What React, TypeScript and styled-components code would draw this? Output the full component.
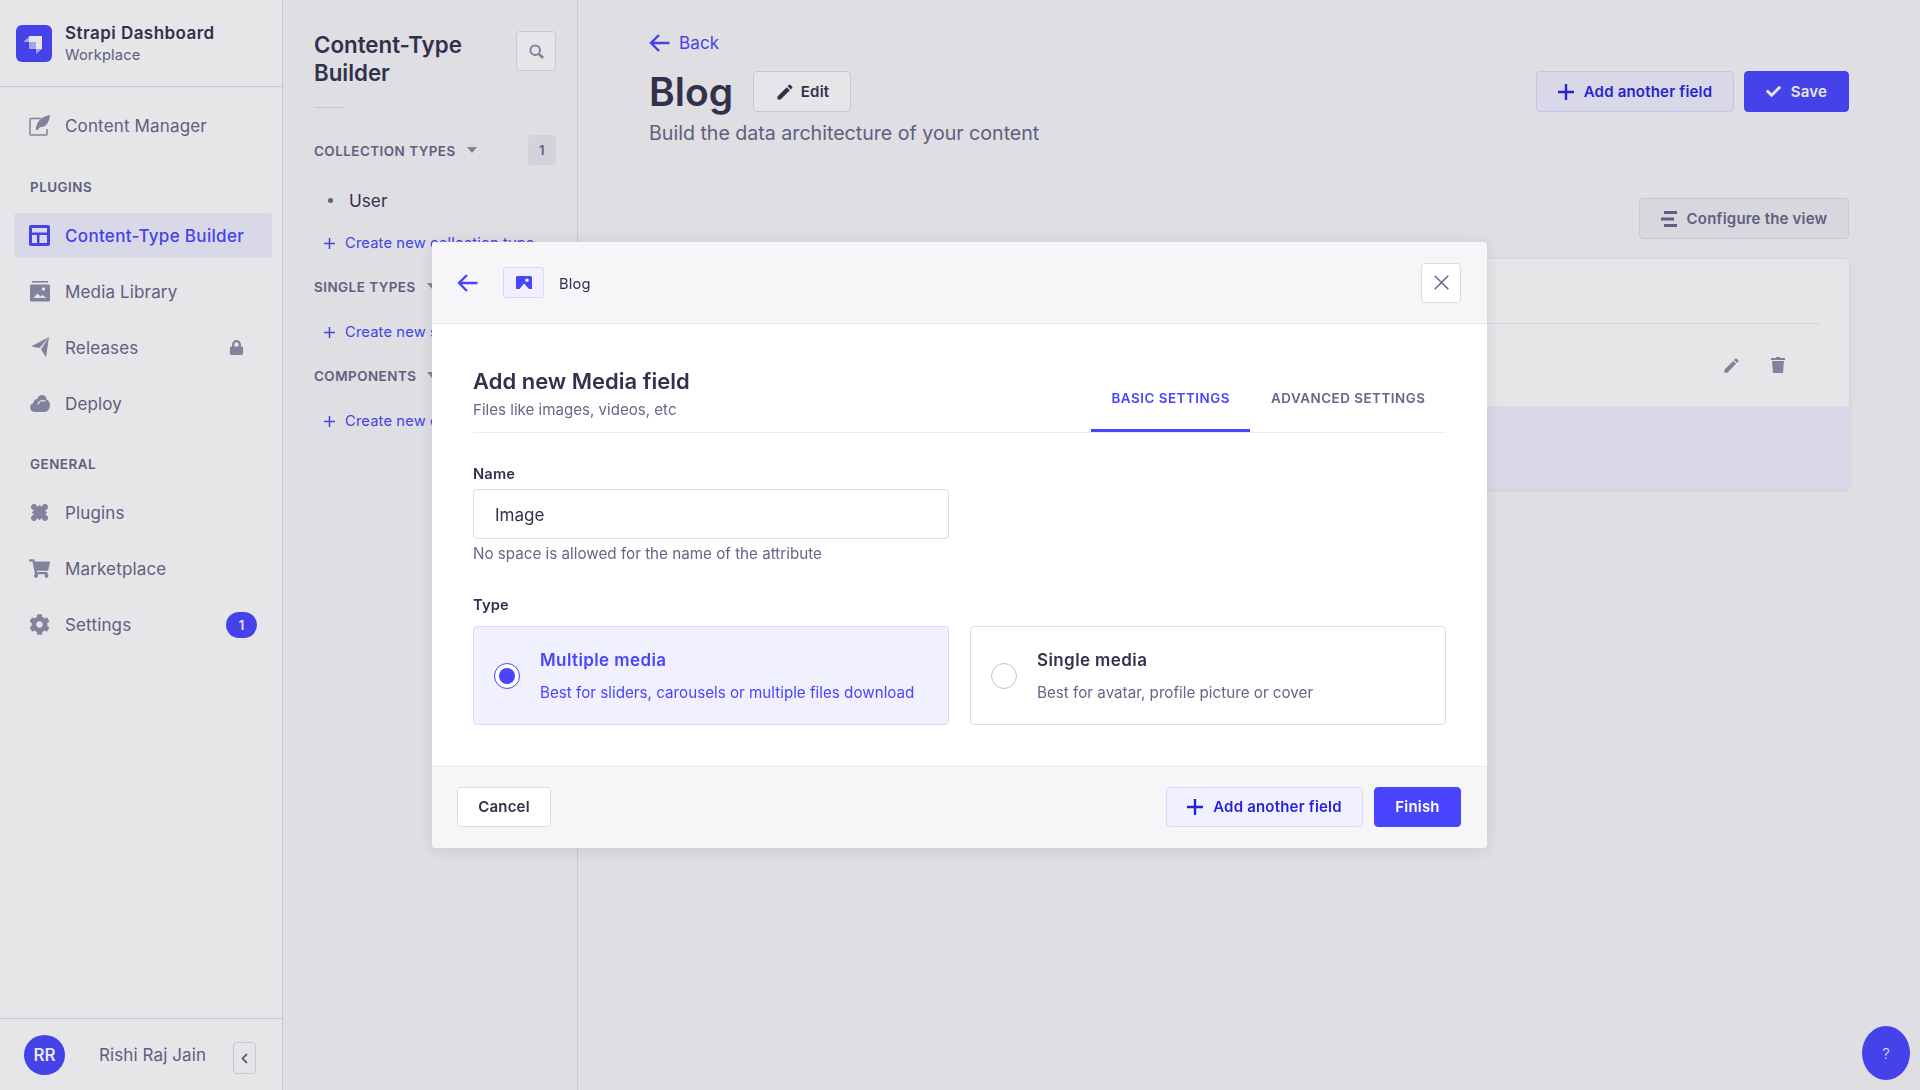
import React from "react";
import styled, { createGlobalStyle } from "styled-components";
import { FaCog, FaLock, FaShoppingCart, FaCheck } from "react-icons/fa";
import { MdEdit } from "react-icons/md";

const Global = createGlobalStyle`
  html, body { margin: 0; padding: 0; height: 100%; }
  body { background: #f6f6f9; font-family: Inter, "Noto Sans", sans-serif; color: #32324d; overflow: hidden; }
  * { box-sizing: border-box; }
`;

const Page = styled.div`display: flex; width: 1920px; height: 1090px; background: #f6f6f9;`;

/* Sidebar */
const Sidebar = styled.aside`
  width: 283px; flex: none; display: flex; flex-direction: column;
  background: #fff; border-right: 1px solid #dcdce4;
`;
const Brand = styled.div`
  height: 87px; flex: none; display: flex; align-items: center; gap: 13px; padding: 0 16px;
  border-bottom: 1px solid #dcdce4;
`;
const BrandText = styled.div`display: flex; flex-direction: column; gap: 3px; padding-top: 1px;`;
const BrandName = styled.div`font-size: 17px; line-height: 20px; font-weight: 600; letter-spacing: 0.45px; color: #32324d;`;
const BrandSub = styled.div`font-size: 14.7px; line-height: 18px; letter-spacing: 0.15px; color: #666687;`;
const Nav = styled.nav`flex: 1; display: flex; flex-direction: column; padding: 16px 10px 0 14px; gap: 11px;`;
const NavLabel = styled.div<{ $top: number }>`
  height: 16px; line-height: 16px; margin: ${p => p.$top}px 0 7px 16px; font-size: 13.4px; font-weight: 600;
  color: #666687; text-transform: uppercase; letter-spacing: 0.5px;
`;
const NavItem = styled.a<{ $active?: boolean }>`
  height: 45px; display: flex; align-items: center; gap: 15px; padding: 0 15px; border-radius: 4px;
  font-size: 17px; font-weight: ${p => (p.$active ? 500 : 400)}; letter-spacing: ${p => (p.$active ? "0.32px" : "0.15px")};
  color: ${p => (p.$active ? "#4945ff" : "#666687")};
  background: ${p => (p.$active ? "#f0f0ff" : "transparent")};
`;
const NavIcon = styled.span<{ $active?: boolean }>`
  width: 21px; height: 21px; flex: none; display: flex; align-items: center; justify-content: center;
  color: ${p => (p.$active ? "#4945ff" : "#8e8ea9")};
`;
const NavSide = styled.span`margin-left: auto; display: flex; align-items: center; color: #8e8ea9;`;
const LockWrap = styled(NavSide)`margin-right: 13px;`;
const CountPill = styled.span`
  width: 31px; height: 26px; border-radius: 13px; background: #4945ff; color: #fff;
  font-size: 13px; font-weight: 600; display: flex; align-items: center; justify-content: center;
`;
const SideFoot = styled.div`
  height: 72px; flex: none; display: flex; align-items: center; padding: 0 26px 0 24px;
  border-top: 1px solid #dcdce4;
`;
const Avatar = styled.div`
  width: 41px; height: 40px; border-radius: 50%; background: #4945ff; color: #fff; flex: none;
  font-size: 17px; font-weight: 600; display: flex; align-items: center; justify-content: center;
`;
const UserName = styled.div`margin-left: 34px; font-size: 17px; letter-spacing: 0.1px; color: #666687;`;
const Collapse = styled.button`
  margin: 7px 0 0 auto; width: 23px; height: 32px; padding: 0; border-radius: 4px;
  border: 1px solid #dcdce4; background: #fff; color: #666687; display: flex; align-items: center; justify-content: center;
`;

/* Content type panel */
const Panel = styled.section`
  width: 295px; flex: none; padding: 31px 21px 0 31px; border-right: 1px solid #dcdce4;
`;
const PanelHead = styled.div`display: flex; justify-content: space-between; align-items: flex-start;`;
const PanelTitle = styled.h2`margin: 0; width: 170px; font-size: 22.3px; line-height: 28px; font-weight: 600; color: #32324d;`;
const SearchBtn = styled.button`
  width: 40px; height: 40px; padding: 0; border: 1px solid #dcdce4; border-radius: 4px; background: #fff;
  color: #8e8ea9; display: flex; align-items: center; justify-content: center;
`;
const ShortRule = styled.div`width: 30px; height: 1px; background: #dcdce4; margin: 20px 0 27px;`;
const SectionHead = styled.div<{ $later?: boolean }>`
  display: flex; align-items: center; gap: 11px; margin-top: ${p => (p.$later ? "23px" : "0")};
  min-height: 16px; font-size: 13.4px; font-weight: 600; letter-spacing: 0.5px; text-transform: uppercase; color: #666687;
`;
const SectionText = styled.span`padding-top: 2px;`;
const CountTag = styled.span`
  margin-left: auto; width: 28px; height: 30px; border-radius: 4px; background: #eaeaef; color: #666687;
  font-size: 13px; font-weight: 600; display: flex; align-items: center; justify-content: center;
`;
const ListItem = styled.div`
  display: flex; align-items: center; height: 28px; margin: 21px 0 0 14px; gap: 16px;
  font-size: 17.2px; color: #32324d;
  &::before { content: ""; width: 5px; height: 5px; border-radius: 50%; background: #666687; }
`;
const CreateLink = styled.a<{ $tight?: boolean }>`
  display: flex; align-items: center; gap: 10px; height: 22px; margin: ${p => (p.$tight ? "18px" : "26px")} 0 0 10px;
  font-size: 14.7px; letter-spacing: 0.15px; color: #4945ff; white-space: nowrap;
`;

/* Main */
const Main = styled.main`flex: 1; min-width: 0; padding: 31px 71px 0 71px;`;
const BackLink = styled.a`display: flex; align-items: center; gap: 9px; height: 24px; font-size: 17px; letter-spacing: 0.15px; color: #4945ff;`;
const HeadRow = styled.div`display: flex; justify-content: space-between; align-items: flex-start; margin-top: 16px;`;
const TitleRow = styled.div`display: flex; align-items: center; gap: 20px; height: 41px;`;
const PageTitle = styled.h1`margin: 0; font-size: 39px; line-height: 41px; font-weight: 600; color: #32324d;`;
const Subtitle = styled.p`margin: 9px 0 0; font-size: 19.6px; line-height: 24px; color: #666687;`;
const Actions = styled.div`display: flex; gap: 10px;`;
const Btn = styled.button<{ $kind?: "light" | "primary" | "ghost" | "tint"; $w: number; $h?: number; $gap?: number }>`
  width: ${p => p.$w}px; height: ${p => p.$h ?? 41}px; padding: 0; flex: none; border-radius: 4px; border: 1px solid;
  display: inline-flex; align-items: center; justify-content: center; gap: ${p => p.$gap ?? 10}px;
  font-family: inherit; font-size: 15px; font-weight: 600; letter-spacing: 0.2px;
  ${p => p.$kind === "primary" && "background:#4945ff;border-color:#4945ff;color:#fff;"}
  ${p => p.$kind === "tint" && "background:#f0f0ff;border-color:#d9d8ff;color:#271fe0;"}
  ${p => p.$kind === "ghost" && "background:#eeeef2;border-color:#dcdce4;color:#666687;"}
  ${p => (!p.$kind || p.$kind === "light") && "background:#fff;border-color:#dcdce4;color:#32324d;"}
`;
const ConfigRow = styled.div`display: flex; justify-content: flex-end; margin-top: 53px;`;
const Card = styled.div`
  margin-top: 20px; background: #fff; border-radius: 4px; overflow: hidden; box-shadow: 0 1px 4px rgba(33,33,52,.1);
`;
const CardHead = styled.div`height: 65px; margin: 0 30px; border-bottom: 1px solid #eaeaef;`;
const CardRow = styled.div`height: 82px; display: flex; align-items: center; justify-content: flex-end; gap: 30px; padding-right: 64px; color: #8e8ea9;`;
const CardFoot = styled.div`height: 83px; background: #f0f0ff;`;
const HelpBtn = styled.button`
  position: absolute; right: 10px; bottom: 10px; width: 48px; height: 54px; padding: 0; border: 0; border-radius: 50%;
  background: #4945ff; color: #fff; font-family: inherit; font-size: 15px; font-weight: 300;
`;

/* Overlay + modal */
const Overlay = styled.div`
  position: fixed; inset: 0; z-index: 5; background: rgba(50, 50, 77, 0.12);
  display: flex; align-items: flex-start; padding: 242px 0 0 432px;
`;
const Modal = styled.div`
  width: 1055px; height: 606px; display: flex; flex-direction: column; background: #fff; border-radius: 4px; overflow: hidden;
  box-shadow: 0 2px 15px rgba(33, 33, 52, 0.1);
`;
const ModalHead = styled.header`
  height: 82px; flex: none; display: flex; align-items: center; padding: 0 26px 0 25px; background: #f6f6f9;
  border-bottom: 1px solid #eaeaef;
`;
const BackArrow = styled.span`display: flex; color: #4945ff; margin-right: 25px;`;
const TypeChip = styled.span`
  width: 41px; height: 31px; border-radius: 3px; background: #f0f0ff; border: 1px solid #d9d8ff; color: #4945ff;
  display: flex; align-items: center; justify-content: center; margin-right: 15px;
`;
const Crumb = styled.span`font-size: 14.7px; letter-spacing: 0.15px; padding-top: 2px; color: #32324d;`;
const CloseBtn = styled.button`
  margin-left: auto; width: 40px; height: 40px; padding: 0; background: #fff; border: 1px solid #dcdce4; border-radius: 4px;
  color: #666687; display: flex; align-items: center; justify-content: center;
`;
const ModalBody = styled.div`flex: 1; padding: 0 41px;`;
const TabRow = styled.div`display: flex; justify-content: space-between; align-items: flex-end; border-bottom: 1px solid #eaeaef;`;
const HeadBlock = styled.div`padding: 42px 0 12px;`;
const ModalTitle = styled.h3`margin: 0; font-size: 22px; line-height: 30px; font-weight: 600; color: #32324d;`;
const ModalSub = styled.p`margin: 4px 0 0; font-size: 15.1px; line-height: 20px; color: #666687;`;
const Tabs = styled.div`display: flex;`;
const Tab = styled.div<{ $active?: boolean }>`
  padding: 0 20.500px 23px; line-height: 16px; font-size: 13.4px; font-weight: 600; letter-spacing: 0.52px; text-transform: uppercase;
  color: ${p => (p.$active ? "#4945ff" : "#666687")};
  border-bottom: 3px solid ${p => (p.$active ? "#4945ff" : "transparent")};
`;
const FieldLabel = styled.label<{ $top: number }>`
  display: block; margin-top: ${p => p.$top}px; font-size: 14.7px; line-height: 18px; font-weight: 600; letter-spacing: 0.15px; color: #32324d;
`;
const TextInput = styled.input`
  display: block; margin-top: 6px; width: 476px; height: 50px; padding: 2px 21px 0; border: 1px solid #dcdce4; border-radius: 4px;
  font-family: inherit; font-size: 17px; color: #32324d; background: #fff; outline: none;
`;
const Hint = styled.div`margin-top: 6px; font-size: 15.2px; line-height: 18px; color: #666687;`;
const RadioGrid = styled.div`display: grid; grid-template-columns: 476px 476px; gap: 21px; margin-top: 12px;`;
const RadioCard = styled.div<{ $on?: boolean }>`
  height: 99px; display: flex; align-items: center; gap: 20px; padding-left: 20px; border-radius: 4px; border: 1px solid;
  border-color: ${p => (p.$on ? "#d9d8ff" : "#dcdce4")}; background: ${p => (p.$on ? "#f0f0ff" : "#fff")};
`;
const RadioDot = styled.span<{ $on?: boolean }>`
  width: 26px; height: 26px; flex: none; border-radius: 50%; background: #fff; display: flex; align-items: center; justify-content: center;
  border: 1px solid ${p => (p.$on ? "#4945ff" : "#c0c0cf")};
  &::after { content: ""; width: 16px; height: 16px; border-radius: 50%; background: ${p => (p.$on ? "#4945ff" : "transparent")}; }
`;
const RadioName = styled.div<{ $on?: boolean }>`font-size: 17px; line-height: 22px; font-weight: 600; letter-spacing: 0.4px; color: ${p => (p.$on ? "#4945ff" : "#32324d")};`;
const RadioDesc = styled.div<{ $on?: boolean }>`margin-top: 12px; font-size: 15.2px; line-height: 20px; color: ${p => (p.$on ? "#4945ff" : "#666687")};`;
const ModalFoot = styled.footer`
  height: 82px; flex: none; display: flex; align-items: center; justify-content: space-between; padding: 0 26px 2px 25px;
  background: #f6f6f9; border-top: 1px solid #eaeaef;
`;
const FootActions = styled.div`display: flex; gap: 11px;`;

/* Icons */
const Arrow = () => (
  <svg width="21" height="20" viewBox="0 0 21 20" fill="none" stroke="currentColor" strokeWidth="2.400">
    <path d="M20.500 10H2M10 2l-8 8 8 8" />
  </svg>
);
const Plus = ({ s = 16 }: { s?: number }) => (
  <svg width={s} height={s} viewBox="0 0 16 16" fill="none" stroke="currentColor" strokeWidth={s > 12 ? 2.4 : 2.2}>
    <path d="M8 0v16M0 8h16" />
  </svg>
);
const Caret = () => (
  <svg width="10" height="6" viewBox="0 0 10 6" fill="#8e8ea9"><path d="M0 0h10L5 6z" /></svg>
);
const Logo = () => (
  <svg width="36" height="37" viewBox="0 0 36 37">
    <rect width="36" height="37" rx="6" fill="#4945ff" />
    <path d="M13 11h13v13h-6v-7h-7z" fill="#fff" />
    <path d="M13 12v5H7zM13 17h7v7h-7zM20 24h6l-6 5z" fill="#fff" fillOpacity=".6" />
  </svg>
);
const FeatherBox = () => (
  <svg width="21" height="21" viewBox="0 0 21 21" fill="none">
    <path d="M12 3.500H2a1 1 0 0 0-1 1v14.500a1 1 0 0 0 1 1h15a1 1 0 0 0 1-1V14" stroke="currentColor" strokeWidth="1.500" />
    <path d="M21 0c-.4 4.500-1.800 7.500-3.500 9.500-1.800 2-3.800 2.700-6.500 2.800L8.500 15H6.800C7 8 11.500 1.500 21 0z" fill="currentColor" />
  </svg>
);
const LayoutIcon = () => (
  <svg width="21" height="21" viewBox="0 0 21 21">
    <rect width="21" height="21" rx="2" fill="#4945ff" />
    <path d="M3 3h15v4.500H3zM3 10h5v8H3zM10.500 10H18v8h-7.500z" fill="#f0f0ff" />
  </svg>
);
const MediaLib = () => (
  <svg width="20" height="21" viewBox="0 0 20 21">
    <rect x="2" y="0" width="16" height="1.600" fill="currentColor" />
    <rect x="0" y="3.500" width="20" height="17" rx="1.500" fill="currentColor" />
    <path d="M3.500 17l4-4.500 3 3 2-1.500 4 3z" fill="#fff" />
    <circle cx="13.500" cy="8" r="1.700" fill="#fff" />
  </svg>
);
const Plane = () => (
  <svg width="18" height="21" viewBox="0 0 18 21" fill="currentColor">
    <path d="M18 0L15 20.500 10 12.300zM18 0L0 9.500l8.500 1.500z" />
  </svg>
);
const Cloud = () => (
  <svg width="20" height="17" viewBox="0 0 20 17">
    <path d="M4.500 17a4.500 4.500 0 0 1-1.200-8.800C3.800 5 5.500 4 7.200 4 8.200 1.500 10 0 12 0c2.500 0 4.500 2 4.800 4.700C18.800 5.600 20 7.500 20 10c0 4-2.500 7-5.500 7z" fill="currentColor" />
    <path d="M8 9c1-3 4-4 7-3" fill="none" stroke="#fff" strokeWidth="1.300" strokeLinecap="round" />
  </svg>
);
const Puzzle = () => (
  <svg width="21" height="21" viewBox="0 0 21 21" fill="currentColor">
    <g transform="rotate(45 10.500 10.500)">
      <rect x="5" y="5" width="11" height="11" rx=".8" />
      <circle cx="10.500" cy="2.800" r="3" />
      <circle cx="18.200" cy="10.500" r="3" />
      <circle cx="2.800" cy="10.500" r="3" />
      <circle cx="10.500" cy="18.200" r="3" />
    </g>
  </svg>
);
const Search = () => (
  <svg width="15" height="15" viewBox="0 0 15 15" fill="none" stroke="currentColor">
    <circle cx="6.200" cy="6.200" r="4.800" strokeWidth="2" />
    <path d="M10 10l4 4" strokeWidth="2.800" />
  </svg>
);
const BarsIcon = () => (
  <svg width="16" height="16" viewBox="0 0 16 16" fill="currentColor">
    <rect x="3" y="0" width="13" height="3" />
    <rect x="0" y="6.500" width="13" height="3" />
    <rect x="3" y="13" width="13" height="3" />
  </svg>
);
const Trash = () => (
  <svg width="14" height="16" viewBox="0 0 14 16" fill="currentColor">
    <path d="M5 0h4v1h5v2H0V1h5zM1 4h12l-1 12H2z" />
  </svg>
);
const ImageChip = () => (
  <svg width="16" height="14" viewBox="0 0 16 14" fill="currentColor">
    <path fillRule="evenodd" d="M1.500 0h13A1.500 1.500 0 0 1 16 1.500V13h-3L8 7.500 3.500 13H0V1.500A1.500 1.500 0 0 1 1.500 0zM11 2.500a1.800 1.800 0 1 0 0 3.600 1.800 1.800 0 0 0 0-3.600z" />
  </svg>
);
const Cross = () => (
  <svg width="15" height="15" viewBox="0 0 15 15" fill="none" stroke="currentColor" strokeWidth="1.500">
    <path d="M.7.7l13.600 13.600M14.300.7L.7 14.300" />
  </svg>
);
const Chevron = () => (
  <svg width="7" height="11" viewBox="0 0 7 11" fill="none" stroke="currentColor" strokeWidth="1.800">
    <path d="M6 1L1.500 5.500 6 10" />
  </svg>
);

const Sections = [
  { label: "Collection Types", count: true, create: "Create new collection type" },
  { label: "Single Types", count: false, create: "Create new single type" },
  { label: "Components", count: false, create: "Create new component" },
];

export default function App() {
  return (
    <>
      <Global />
      <Page>
        <Sidebar>
          <Brand>
            <Logo />
            <BrandText>
              <BrandName>Strapi Dashboard</BrandName>
              <BrandSub>Workplace</BrandSub>
            </BrandText>
          </Brand>
          <Nav>
            <NavItem><NavIcon><FeatherBox /></NavIcon>Content Manager</NavItem>
            <NavLabel $top={20}>Plugins</NavLabel>
            <NavItem $active><NavIcon $active><LayoutIcon /></NavIcon>Content-Type Builder</NavItem>
            <NavItem><NavIcon><MediaLib /></NavIcon>Media Library</NavItem>
            <NavItem>
              <NavIcon><Plane /></NavIcon>Releases
              <LockWrap><FaLock size={15} /></LockWrap>
            </NavItem>
            <NavItem><NavIcon><Cloud /></NavIcon>Deploy</NavItem>
            <NavLabel $top={19}>General</NavLabel>
            <NavItem><NavIcon><Puzzle /></NavIcon>Plugins</NavItem>
            <NavItem><NavIcon><FaShoppingCart size={21} /></NavIcon>Marketplace</NavItem>
            <NavItem>
              <NavIcon><FaCog size={21} /></NavIcon>Settings
              <NavSide><CountPill>1</CountPill></NavSide>
            </NavItem>
          </Nav>
          <SideFoot>
            <Avatar>RR</Avatar>
            <UserName>Rishi Raj Jain</UserName>
            <Collapse aria-label="Collapse"><Chevron /></Collapse>
          </SideFoot>
        </Sidebar>

        <Panel>
          <PanelHead>
            <PanelTitle>Content-Type Builder</PanelTitle>
            <SearchBtn aria-label="Search"><Search /></SearchBtn>
          </PanelHead>
          <ShortRule />
          {Sections.map((s, i) => (
            <div key={s.label}>
              <SectionHead $later={i > 0}>
                <SectionText>{s.label}</SectionText>
                <Caret />
                {s.count && <CountTag>1</CountTag>}
              </SectionHead>
              {s.count && <ListItem>User</ListItem>}
              <CreateLink $tight={s.count}><Plus s={11} />{s.create}</CreateLink>
            </div>
          ))}
        </Panel>

        <Main>
          <BackLink><Arrow />Back</BackLink>
          <HeadRow>
            <div>
              <TitleRow>
                <PageTitle>Blog</PageTitle>
                <Btn $w={98} $gap={6}><MdEdit size={20} />Edit</Btn>
              </TitleRow>
              <Subtitle>Build the data architecture of your content</Subtitle>
            </div>
            <Actions>
              <Btn $kind="tint" $w={198}><Plus />Add another field</Btn>
              <Btn $kind="primary" $w={105}><FaCheck size={15} />Save</Btn>
            </Actions>
          </HeadRow>
          <ConfigRow>
            <Btn $kind="ghost" $w={210}><BarsIcon />Configure the view</Btn>
          </ConfigRow>
          <Card>
            <CardHead />
            <CardRow>
              <MdEdit size={19} />
              <Trash />
            </CardRow>
            <CardFoot />
          </Card>
        </Main>
      </Page>

      <HelpBtn>?</HelpBtn>

      <Overlay>
        <Modal>
          <ModalHead>
            <BackArrow><Arrow /></BackArrow>
            <TypeChip><ImageChip /></TypeChip>
            <Crumb>Blog</Crumb>
            <CloseBtn aria-label="Close"><Cross /></CloseBtn>
          </ModalHead>
          <ModalBody>
            <TabRow>
              <HeadBlock>
                <ModalTitle>Add new Media field</ModalTitle>
                <ModalSub>Files like images, videos, etc</ModalSub>
              </HeadBlock>
              <Tabs>
                <Tab $active>Basic Settings</Tab>
                <Tab>Advanced Settings</Tab>
              </Tabs>
            </TabRow>
            <FieldLabel $top={32}>Name</FieldLabel>
            <TextInput defaultValue="Image" readOnly />
            <Hint>No space is allowed for the name of the attribute</Hint>
            <FieldLabel $top={33}>Type</FieldLabel>
            <RadioGrid>
              <RadioCard $on>
                <RadioDot $on />
                <div>
                  <RadioName $on>Multiple media</RadioName>
                  <RadioDesc $on>Best for sliders, carousels or multiple files download</RadioDesc>
                </div>
              </RadioCard>
              <RadioCard>
                <RadioDot />
                <div>
                  <RadioName>Single media</RadioName>
                  <RadioDesc>Best for avatar, profile picture or cover</RadioDesc>
                </div>
              </RadioCard>
            </RadioGrid>
          </ModalBody>
          <ModalFoot>
            <Btn $w={94} $h={40}>Cancel</Btn>
            <FootActions>
              <Btn $kind="tint" $w={197} $h={40}><Plus />Add another field</Btn>
              <Btn $kind="primary" $w={87} $h={40}>Finish</Btn>
            </FootActions>
          </ModalFoot>
        </Modal>
      </Overlay>
    </>
  );
}
